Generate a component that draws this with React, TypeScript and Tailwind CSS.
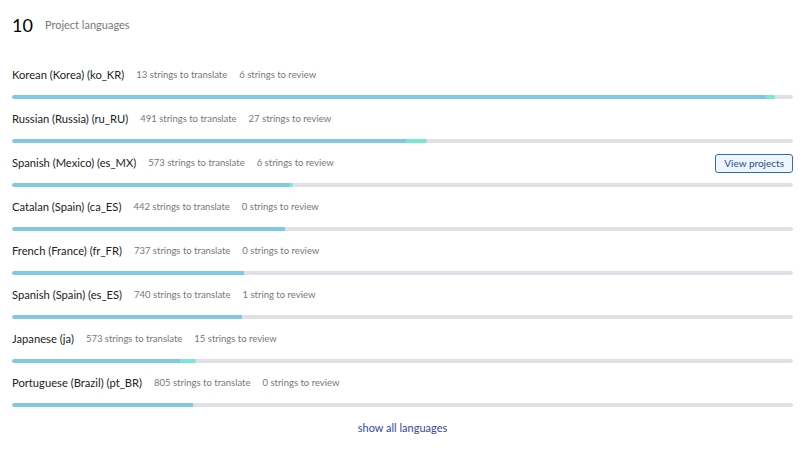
import React from "react";

const languages = [
  { name: "Korean (Korea) (ko_KR)", translate: "13 strings to translate", review: "6 strings to review", done: 96.5, reviewed: 1.2 },
  { name: "Russian (Russia) (ru_RU)", translate: "491 strings to translate", review: "27 strings to review", done: 50.4, reviewed: 2.7 },
  { name: "Spanish (Mexico) (es_MX)", translate: "573 strings to translate", review: "6 strings to review", done: 35.5, reviewed: 0.5, button: true },
  { name: "Catalan (Spain) (ca_ES)", translate: "442 strings to translate", review: "0 strings to review", done: 35, reviewed: 0 },
  { name: "French (France) (fr_FR)", translate: "737 strings to translate", review: "0 strings to review", done: 29.7, reviewed: 0 },
  { name: "Spanish (Spain) (es_ES)", translate: "740 strings to translate", review: "1 string to review", done: 29.4, reviewed: 0 },
  { name: "Japanese (ja)", translate: "573 strings to translate", review: "15 strings to review", done: 21.5, reviewed: 2.1 },
  { name: "Portuguese (Brazil) (pt_BR)", translate: "805 strings to translate", review: "0 strings to review", done: 23.2, reviewed: 0 },
];

const Row = ({ lang }: { lang: (typeof languages)[number] }) => (
  <div className="pb-[10px]">
    <div className="flex items-center h-[20px]">
      <span className="text-[11.2px] text-[#222]">{lang.name}</span>
      <span className="ml-[12px] text-[9.5px] text-[#777]">{lang.translate}</span>
      <span className="ml-[12px] text-[9.5px] text-[#777]">{lang.review}</span>
      {lang.button && (
        <button className="ml-auto h-[19px] px-[8px] text-[10px] text-[#1f4f8f] bg-[#eef5fc] border border-[#2f6db5] rounded-[3px] leading-none">
          View projects
        </button>
      )}
    </div>
    <div className="mt-[10px] h-[4px] w-full rounded-full bg-[#dfe1e7] flex overflow-hidden">
      <div className="h-full bg-[#80c8e6] rounded-l-full" style={{ width: `${lang.done}%` }} />
      <div className="h-full bg-[#78e8d6] rounded-r-full" style={{ width: `${lang.reviewed}%` }} />
    </div>
  </div>
);

export default function App() {
  return (
    <div className="w-[805px] h-[455px] bg-white px-[12px] pt-[11px] font-['Lato',sans-serif]">
      <div className="flex items-center h-[28px] mb-[26px]">
        <span className="text-[18px] text-black leading-none">10</span>
        <span className="ml-[12px] text-[11px] text-[#777]">Project languages</span>
      </div>
      {languages.map((l) => (
        <Row key={l.name} lang={l} />
      ))}
      <div className="flex justify-center mt-[3px]">
        <a className="text-[11px] text-[#3346a8]" href="#">show all languages</a>
      </div>
    </div>
  );
}
